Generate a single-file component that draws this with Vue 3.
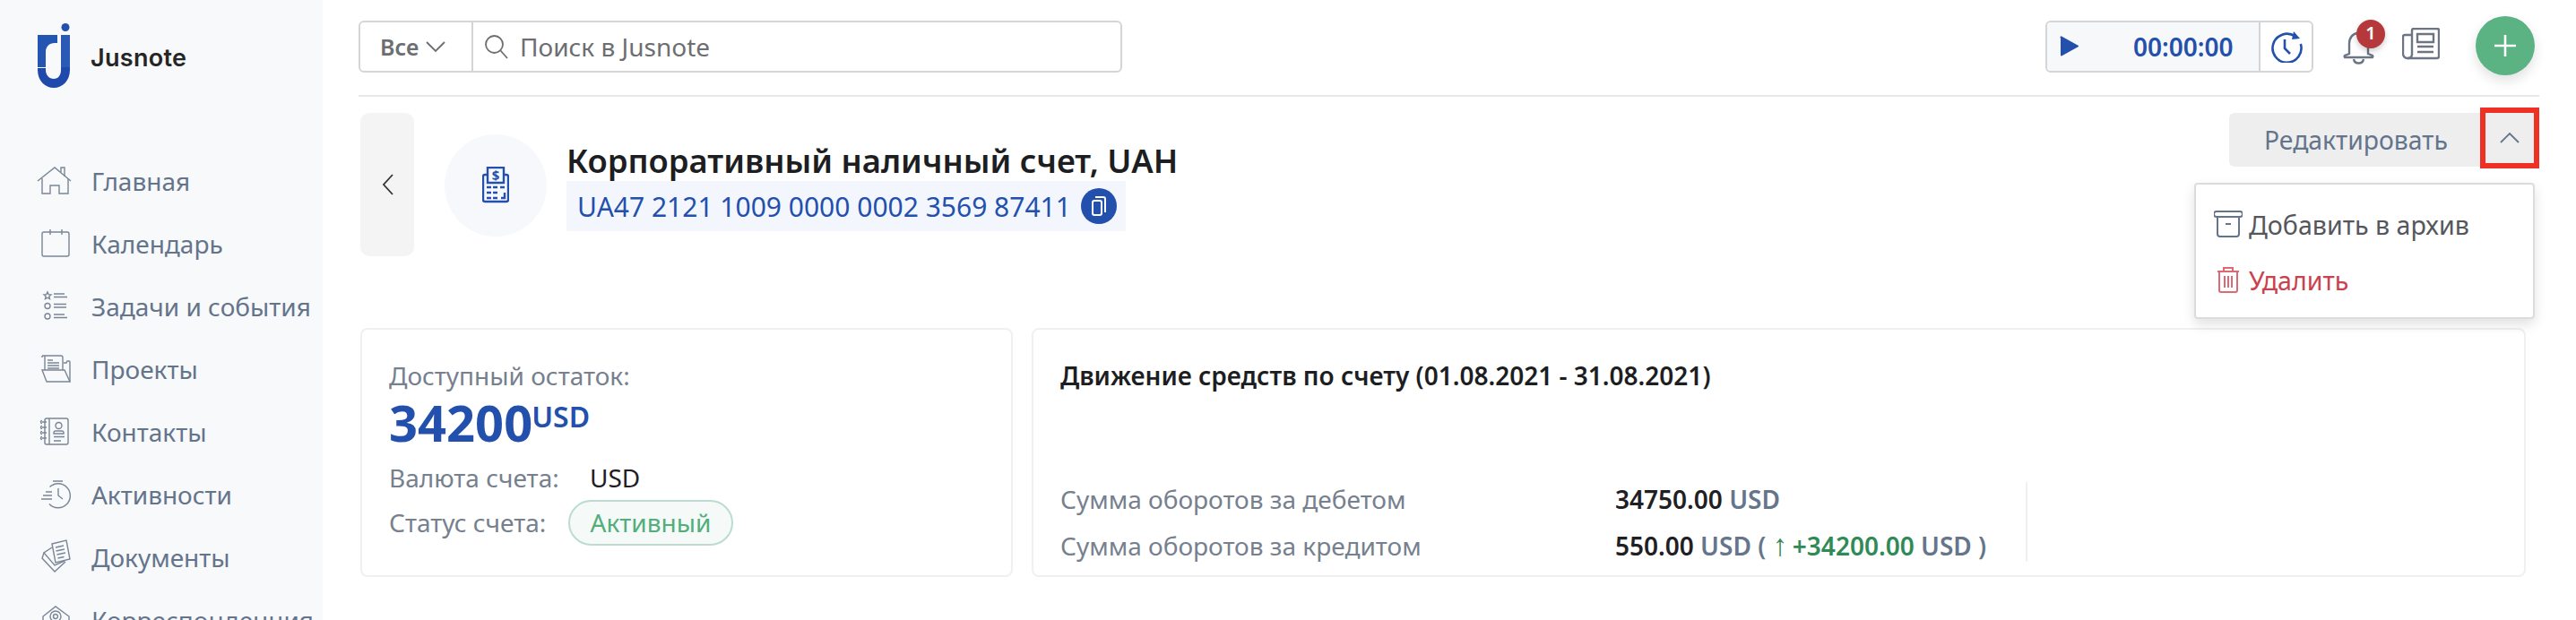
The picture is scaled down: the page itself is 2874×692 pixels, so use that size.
<script setup>
const navItems = [
  { label: 'Главная', paths: ['M1 20 20 5l18 15', 'M27 10V5h4v10', 'M6 17v17h9v-9h10v9h10V17'] },
  { label: 'Календарь', paths: ['M8 7h26a2 2 0 0 1 2 2v23a2 2 0 0 1-2 2H8a2 2 0 0 1-2-2V9a2 2 0 0 1 2-2z', 'M15 4v6M28 4v6'] },
  { label: 'Задачи и события', paths: ['M12 4l1.200 2.600 2.800.3-2.100 1.900.6 2.800-2.500-1.400-2.500 1.400.6-2.800L8 6.900l2.800-.3z', 'M19 6h12M19 9.500h15M19 17.500h14M19 21h14M19 29h12M19 32.500h15', 'M15 19.500a3 3 0 1 1-6 0 3 3 0 0 1 6 0zM15 31a3 3 0 1 1-6 0 3 3 0 0 1 6 0z'] },
  { label: 'Проекты', paths: ['M6 5h21a2 2 0 0 1 2 2v14M9 5v16M6 5v2', 'M12 10h6M12 13h13M12 16h13M12 19h13', 'M6 21h25l6 13H11z', 'M30 13h3l1-2h2a1 1 0 0 1 1 1v22'] },
  { label: 'Контакты', paths: ['M11 5h22a2 2 0 0 1 2 2v25a2 2 0 0 1-2 2H11a2 2 0 0 1-2-2V7a2 2 0 0 1 2-2z', 'M14 5v29', 'M6 9h5M6 15h5M6 21h5M6 27h5', 'M6 7.500a1.500 1.500 0 0 0 0 3M6 13.500a1.500 1.500 0 0 0 0 3M6 19.500a1.500 1.500 0 0 0 0 3M6 25.500a1.500 1.500 0 0 0 0 3', 'M21 13a3.500 3.500 0 1 1 7 0 3.500 3.500 0 0 1-7 0zM19 22v-1.500a2 2 0 0 1 2-1.500h7a2 2 0 0 1 2 1.500V22z', 'M19 25.500h12M19 30h8'] },
  { label: 'Активности', paths: ['M18 5h11M14.500 11.500A13.500 13.500 0 1 1 14 30.500', 'M24 13v8l5 4', 'M10 17h7M7 21h10M5 25h12'] },
  { label: 'Документы', paths: ['M17 5l16-4 4 21-16 4z', 'M21 9l9-2M21.500 13l9.500-2M22.500 17l9.500-2M23.500 21l7-1.500', 'M17 9 8 15l12 14 11-5', 'M8 15l-2 6 14 15 12-11'] },
  { label: 'Корреспонденция', paths: ['M7 16 21 5l15 11v20H7z', 'M27 16a6 6 0 1 1-12 0 6 6 0 0 1 12 0zM23.500 16a2.500 2.500 0 1 1-5 0 2.500 2.500 0 0 1 5 0z'] },
]
</script>

<template>
  <div class="page">
    <aside class="sidebar">
      <div class="logo">
        <svg class="logo-mark" width="38" height="74" viewBox="0 0 38 74">
          <path d="M1 13h22v9h-3c-6 0-10 4-10 10v17H1z" fill="#2555b2" />
          <path d="M27 13h10v36H27z" fill="#2b5ab6" />
          <path d="M27 49h10v3c0 12-8 20-18 20S1 64 1 52v-2h9v2c0 6 4 10 9 10s8-4 8-10z" fill="#1f49aa" />
          <circle cx="32" cy="4.500" r="4.500" fill="#2350ad" />
        </svg>
        <span class="logo-text">Jusnote</span>
      </div>
      <nav class="nav">
        <a v-for="item in navItems" :key="item.label" class="nav-item">
          <svg class="nav-icon" width="40" height="40" viewBox="0 0 40 40">
            <path v-for="d in item.paths" :key="d" :d="d" />
          </svg>
          <span>{{ item.label }}</span>
        </a>
      </nav>
    </aside>

    <main class="main">
      <header class="topbar">
        <div class="search">
          <div class="search-filter">
            <span>Все</span>
            <svg width="22" height="14" viewBox="0 0 22 14"><path d="M1 2l10 10L21 2" /></svg>
          </div>
          <div class="search-field">
            <svg width="28" height="28" viewBox="0 0 28 28"><circle cx="11.500" cy="11.500" r="9.500" /><path d="M18.500 18.500 26 27" /></svg>
            <span>Поиск в Jusnote</span>
          </div>
        </div>
        <div class="top-actions">
          <div class="timer">
            <div class="timer-main">
              <svg width="21" height="24" viewBox="0 0 21 24"><path d="M1 2.500v19a1 1 0 0 0 1.500.8l18-10a1 1 0 0 0 0-1.600l-18-10A1 1 0 0 0 1 2.500z" /></svg>
              <span>00:00:00</span>
            </div>
            <div class="timer-side">
              <svg width="36" height="36" viewBox="0 0 36 36"><path d="M27.500 6.500A16 16 0 1 0 33.800 15" /><path d="M26 1l7 8-9 1z" class="fill" /><path d="M16 10v10l6 6" /></svg>
            </div>
          </div>
          <div class="bell">
            <svg width="38" height="40" viewBox="0 0 38 40"><path d="M8 28V17C8 10 12 5 18 5s11 5 11 12v11l5 2a1.500 1.500 0 0 1 0 2H3a1.500 1.500 0 0 1 0-2z" /><path d="M13 34c1 6 10 6 11 0" /></svg>
            <span class="badge">1</span>
          </div>
          <svg class="news" width="42" height="36" viewBox="0 0 42 36"><path d="M11 31V3a2 2 0 0 1 2-2h26a2 2 0 0 1 2 2v29a2 2 0 0 1-2 2H6a5 5 0 0 1-5-5V10a2 2 0 0 1 2-2h8" /><path d="M6 34a5 5 0 0 0 5-3" /><path d="M17 7h18v9H17zM17 21h18M17 27h18" /></svg>
          <button class="add">
            <svg width="26" height="26" viewBox="0 0 26 26"><path d="M13 1v24M1 13h24" /></svg>
          </button>
        </div>
      </header>

      <section class="account">
        <button class="back">
          <svg width="14" height="24" viewBox="0 0 14 24"><path d="M12 1 2 12l10 11" /></svg>
        </button>
        <div class="avatar">
          <svg width="30" height="42" viewBox="0 0 30 42">
            <path d="M6 9H3a2 2 0 0 0-2 2v26a2 2 0 0 0 2 2h24a2 2 0 0 0 2-2V11a2 2 0 0 0-2-2h-3" />
            <path d="M6 18V1h18v17z" />
            <path d="M5 23h5M12 23h5M20 23h5M5 29h5M12 29h5M5 35h5M12 35h5M25 29v6h-4" />
            <text x="15" y="14.500" text-anchor="middle">$</text>
          </svg>
        </div>
        <div class="account-info">
          <h1>Корпоративный наличный счет, UAH</h1>
          <div class="iban">
            <span>UA47 2121 1009 0000 0002 3569 87411</span>
            <span class="copy">
              <svg width="18" height="24" viewBox="0 0 18 24"><path d="M5 2h9a2 2 0 0 1 2 2v15" /><rect x="2" y="6" width="10" height="16" rx="2" /></svg>
            </span>
          </div>
        </div>
        <div class="account-actions">
          <div class="edit">
            <span class="edit-label">Редактировать</span>
            <span class="chevron">
              <svg width="24" height="14" viewBox="0 0 24 14"><path d="M2 12 12 2l10 10" /></svg>
            </span>
          </div>
          <div class="menu">
            <a class="menu-item">
              <svg width="32" height="30" viewBox="0 0 32 30"><path d="M3 1h26a2 2 0 0 1 0 6H3a2 2 0 0 1 0-6zM4 7v19a3 3 0 0 0 3 3h18a3 3 0 0 0 3-3V7M13 15h6" /></svg>
              <span>Добавить в архив</span>
            </a>
            <a class="menu-item danger">
              <svg width="26" height="30" viewBox="0 0 26 30"><path d="M1 6h24M8 6V2h10v4M3 6v21a2 2 0 0 0 2 2h16a2 2 0 0 0 2-2V6M9 11v13M13 11v13M17 11v13" /></svg>
              <span>Удалить</span>
            </a>
          </div>
        </div>
      </section>

      <section class="cards">
        <div class="card balance">
          <div class="muted">Доступный остаток:</div>
          <div class="amount">34200<sup>USD</sup></div>
          <div class="line"><span class="muted label-currency">Валюта счета:</span><span class="dark">USD</span></div>
          <div class="line"><span class="muted label-status">Статус счета:</span><span class="pill">Активный</span></div>
        </div>
        <div class="card movement">
          <h2>Движение средств по счету (01.08.2021 - 31.08.2021)</h2>
          <div class="rows">
            <div class="row"><span class="muted row-label">Сумма оборотов за дебетом</span><span class="val">34750.00 <i>USD</i></span></div>
            <div class="row"><span class="muted row-label">Сумма оборотов за кредитом</span><span class="val">550.00 <i>USD</i> <i>(</i> <b><u>↑</u> +34200.00</b> <i>USD</i> <i>)</i></span></div>
          </div>
        </div>
      </section>
    </main>
  </div>
</template>

<style>
html, body { margin: 0; background: #fff; overflow: hidden; }
</style>

<style scoped>
* { box-sizing: border-box; }
.page { display: flex; width: 2874px; height: 692px; overflow: hidden; font-family: "Noto Sans", sans-serif; color: #1f2024; }

.sidebar { width: 360px; flex: none; height: 692px; overflow: hidden; background: #f8f9fb; padding: 26px 0 0 41px; }
.logo { display: flex; align-items: center; gap: 22px; height: 74px; }
.logo-mark { flex: none; }
.logo-text { font-family: Inter, sans-serif; font-weight: 600; font-size: 27px; letter-spacing: .3px; color: #262626; margin-top: 2px; }
.nav { margin-top: 67px; display: flex; flex-direction: column; }
.nav-item { display: flex; align-items: center; height: 70px; gap: 21px; font-size: 28px; color: #64748b; white-space: nowrap; }
.nav-icon { flex: none; fill: none; stroke: #7a8696; stroke-width: 1.400; }

.main { flex: 1; min-width: 0; padding: 0 41px 0 40px; }
.topbar { height: 108px; border-bottom: 2px solid #e6e7ea; display: flex; justify-content: space-between; align-items: flex-start; padding-top: 23px; }
.search { display: flex; width: 852px; height: 58px; border: 2px solid #d4d5d7; border-radius: 6px; color: #6c6e72; font-size: 28px; }
.search-filter { width: 126px; flex: none; border-right: 2px solid #d4d5d7; display: flex; align-items: center; gap: 8px; padding-left: 22px; font-weight: 600; font-size: 25px; }
.search-filter svg, .search-field svg { fill: none; stroke: #6c6e72; stroke-width: 1.800; flex: none; }
.search-field { display: flex; align-items: center; gap: 12px; padding-left: 12px; }
.top-actions { display: flex; align-items: flex-start; padding-right: 5px; }
.timer { display: flex; width: 299px; height: 58px; border: 2px solid #d4d5d7; border-radius: 6px; overflow: hidden; }
.timer-main { width: 238px; background: #f7f8fa; border-right: 2px solid #d4d5d7; display: flex; align-items: center; padding-left: 14px; gap: 61px; color: #2350ad; font-weight: 600; font-size: 28px; }
.timer-main svg { fill: #2350ad; flex: none; }
.timer-side { flex: 1; display: flex; align-items: center; justify-content: center; }
.timer-side svg { fill: none; stroke: #2350ad; stroke-width: 2.600; }
.timer-side .fill { fill: #2350ad; stroke: none; }
.bell { position: relative; margin-left: 32px; margin-top: 9px; width: 38px; height: 40px; }
.bell svg { fill: none; stroke: #6b7584; stroke-width: 2.400; }
.badge { position: absolute; left: 16px; top: -10px; width: 32px; height: 32px; border-radius: 50%; background: #b5383b; color: #fff; font-size: 20px; font-weight: 600; line-height: 30px; text-align: center; box-shadow: 0 3px 6px rgba(0,0,0,.2); }
.news { margin-left: 29px; margin-top: 8px; fill: none; stroke: #6b7584; stroke-width: 2.400; flex: none; }
.add { width: 66px; height: 66px; margin: -5px 0 0 40px; border: 0; border-radius: 50%; background: #5bb282; padding: 0; display: flex; align-items: center; justify-content: center; box-shadow: 0 6px 14px rgba(0,0,0,.12); }
.add svg { fill: none; stroke: #fff; stroke-width: 2.600; }

.account { display: flex; align-items: flex-start; padding: 18px 0 0 2px; height: 258px; position: relative; }
.back { width: 60px; height: 160px; border: 0; padding: 0 0 0 2px; background: #f4f4f5; border-radius: 10px; display: flex; align-items: center; justify-content: center; flex: none; }
.back svg { fill: none; stroke: #333; stroke-width: 1.800; }
.avatar { width: 114px; height: 114px; border-radius: 50%; background: #f6f8fc; margin: 24px 0 0 34px; display: flex; align-items: center; justify-content: center; flex: none; }
.avatar svg { fill: none; stroke: #2350ad; stroke-width: 2.400; }
.avatar text { font: 700 15px "Noto Sans", sans-serif; fill: #2350ad; stroke: none; }
.account-info { margin: 28px 0 0 22px; }
h1 { margin: 0; font-size: 36.400px; line-height: 50px; font-weight: 600; color: #1d1e22; white-space: nowrap; }
.iban { display: flex; align-items: center; gap: 11px; height: 56px; padding: 0 11px 0 12px; background: #f3f7fd; color: #2350ad; font-size: 30px; width: 624px; margin-top: -2px; white-space: nowrap; }
.copy { width: 40px; height: 40px; border-radius: 50%; background: #2350ad; display: flex; align-items: center; justify-content: center; flex: none; }
.copy svg { fill: none; stroke: #fff; stroke-width: 2; }
.account-actions { margin-left: auto; position: relative; display: flex; justify-content: flex-end; }
.edit { display: flex; align-items: center; width: 346px; height: 60px; background: #eeeeef; border-radius: 6px; color: #64748b; font-size: 28.300px; }
.edit-label { width: 278px; padding-left: 39px; white-space: nowrap; }
.chevron { position: absolute; right: 0; top: -6px; width: 66px; height: 68px; border: 6px solid #ee3124; display: flex; align-items: center; justify-content: center; }
.chevron svg { fill: none; stroke: #64748b; stroke-width: 1.800; }
.menu { position: absolute; top: 78px; right: 5px; width: 380px; height: 152px; background: #fff; border: 2px solid #dcdcdf; border-radius: 4px; box-shadow: 0 6px 14px rgba(0,0,0,.12); padding: 13px 0 0 20px; z-index: 2; }
.menu-item { display: flex; align-items: center; height: 62px; gap: 7px; font-size: 28.600px; color: #55575c; white-space: nowrap; }
.menu-item svg { flex: none; fill: none; stroke: #64748b; stroke-width: 2; }
.danger { color: #c9434f; }
.danger svg { stroke: #dc6a75; margin: 0 3px; }

.cards { display: flex; gap: 21px; padding-left: 2px; padding-right: 15px; }
.card { height: 278px; border: 2px solid #f0f0f1; border-radius: 8px; font-size: 28px; }
.muted { color: #76808e; }
.balance { width: 728px; flex: none; padding: 33px 0 0 30px; }
.balance > .muted { line-height: 36px; }
.amount { font-size: 56px; line-height: 68px; font-weight: 700; color: #2350ad; margin-top: 0; height: 71px; }
.amount sup { font-size: 32px; font-weight: 600; line-height: 0; vertical-align: 16px; margin-left: -1px; }
.line { display: flex; align-items: center; height: 50px; }
.label-currency { width: 224px; }
.label-status { width: 200px; }
.dark { color: #1f2024; }
.pill { height: 51px; width: 184px; border: 2px solid #bcdccf; border-radius: 26px; background: #f5faf8; color: #52ae7b; display: flex; align-items: center; justify-content: center; }
.movement { flex: 1; padding: 33px 0 0 30px; display: flex; flex-direction: column; }
h2 { margin: 0; font-size: 28px; line-height: 36px; font-weight: 600; color: #1d1e22; white-space: nowrap; }
.rows { margin-top: 101px; width: 1079px; height: 89px; border-right: 2px solid #f0f0f1; }
.row { display: flex; height: 52px; align-items: center; white-space: nowrap; }
.row:first-child { margin-top: -7px; }
.row-label { width: 619px; flex: none; }
.val { font-weight: 600; white-space: pre-wrap; }
.val i { font-style: normal; color: #66758a; }
.val b { font-weight: 600; color: #2f8a57; }
.val u { text-decoration: none; font-weight: 400; font-size: 34px; line-height: 0; margin-right: -2px; }
</style>
